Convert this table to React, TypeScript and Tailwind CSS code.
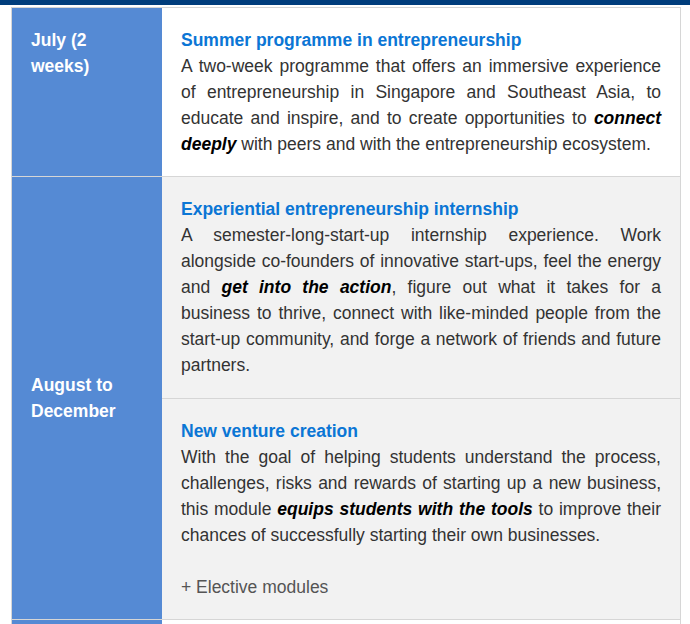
import React from 'react';

const Title = ({ children }: { children: React.ReactNode }) => (
  <h3 className="font-bold text-[#0b76d5]">{children}</h3>
);

const Em = ({ children }: { children: React.ReactNode }) => (
  <strong className="font-bold italic text-black">{children}</strong>
);

const App = () => {
  return (
    <div className="min-h-screen bg-white font-['Liberation_Sans',Arial,sans-serif] text-[17.5px] leading-[26px] text-[#333333]">
      {/* Top bar */}
      <div className="h-[5px] bg-[#003d7c]" />

      {/* Schedule table */}
      <div className="ml-[11px] mt-[2px] w-[670px] border border-[#d6d6d6] border-b-0">
        {/* July */}
        <div className="grid grid-cols-[150px_1fr] border-b border-[#d6d6d6]">
          <div className="bg-[#558ad4] px-[19px] py-[19px] font-bold text-white">
            July (2 weeks)
          </div>
          <div className="bg-white px-[19px] py-[19px]">
            <Title>Summer programme in entrepreneurship</Title>
            <p className="text-justify">
              A two-week programme that offers an immersive experience of entrepreneurship in
              Singapore and Southeast Asia, to educate and inspire, and to create opportunities to{' '}
              <Em>connect deeply</Em> with peers and with the entrepreneurship ecosystem.
            </p>
          </div>
        </div>

        {/* August to December */}
        <div className="grid grid-cols-[150px_1fr] border-b border-[#d6d6d6]">
          <div className="flex items-center bg-[#558ad4] px-[19px] font-bold text-white">
            August to December
          </div>
          <div className="bg-[#f2f2f2]">
            <div className="border-b border-[#d6d6d6] px-[19px] pb-[20px] pt-[19px]">
              <Title>Experiential entrepreneurship internship</Title>
              <p className="text-justify">
                A semester-long-start-up internship experience. Work alongside co-founders of
                innovative start-ups, feel the energy and <Em>get into the action</Em>, figure out
                what it takes for a business to thrive, connect with like-minded people from the
                start-up community, and forge a network of friends and future partners.
              </p>
            </div>
            <div className="px-[19px] py-[19px]">
              <Title>New venture creation</Title>
              <p className="text-justify">
                With the goal of helping students understand the process, challenges, risks and
                rewards of starting up a new business, this module{' '}
                <Em>equips students with the tools</Em> to improve their chances of successfully
                starting their own businesses.
              </p>
              <p className="mt-[26px] text-[#555555]">+ Elective modules</p>
            </div>
          </div>
        </div>

        {/* Next row (cut off) */}
        <div className="grid grid-cols-[150px_1fr]">
          <div className="h-[60px] bg-[#558ad4]" />
          <div className="bg-white" />
        </div>
      </div>
    </div>
  );
};

export default App;
